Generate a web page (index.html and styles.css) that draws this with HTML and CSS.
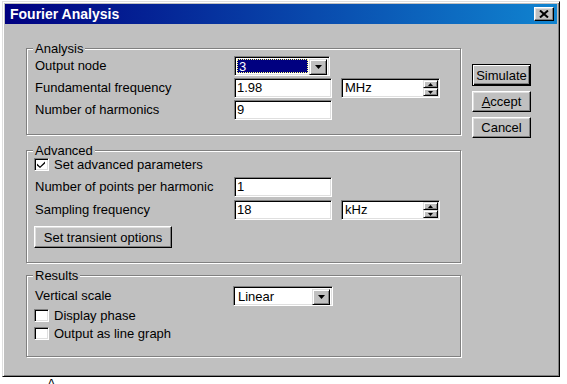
FILE: index.html
```html
<!DOCTYPE html>
<html lang="en">
<head>
    <meta charset="UTF-8">
    <meta name="viewport" content="width=device-width, initial-scale=1.0">
    <title>Fourier Analysis</title>
    <link rel="stylesheet" href="styles.css">
</head>
<body>
    <div class="window">
        <div class="titlebar">
            <span class="title">Fourier Analysis</span>
            <span class="close-btn">
                <svg width="10" height="8" viewBox="0 0 10 8"><path d="M1 0.5 L9 7.5 M9 0.5 L1 7.5" stroke="#000" stroke-width="2" fill="none"/></svg>
            </span>
        </div>
        <div class="content">
            <div class="groups">
                <div class="group analysis">
                    <div class="legend">Analysis</div>
                    <div class="row">
                        <span class="label">Output node</span>
                        <div class="field combo combo-node">
                            <span class="combo-value selected">3</span>
                            <span class="drop-btn"><svg width="7" height="4" viewBox="0 0 7 4"><path d="M0 0h7L3.5 4z" fill="#000"/></svg></span>
                        </div>
                    </div>
                    <div class="row">
                        <span class="label">Fundamental frequency</span>
                        <div class="field">1.98</div>
                        <div class="field spin-field">
                            <span class="spin-value">MHz</span>
                            <span class="spin">
                                <span class="spin-btn"><svg width="5" height="3" viewBox="0 0 5 3"><path d="M2.5 0L5 3H0z" fill="#000"/></svg></span>
                                <span class="spin-btn"><svg width="5" height="3" viewBox="0 0 5 3"><path d="M0 0h5L2.5 3z" fill="#000"/></svg></span>
                            </span>
                        </div>
                    </div>
                    <div class="row">
                        <span class="label">Number of harmonics</span>
                        <div class="field">9</div>
                    </div>
                </div>

                <div class="group advanced">
                    <div class="legend">Advanced</div>
                    <div class="check-row set-advanced">
                        <span class="check">
                            <svg width="9" height="7" viewBox="0 0 9 7"><path d="M0 2.5L3 5.5L8 0.5L8 2.5L3 7L0 4.5z" fill="#000"/></svg>
                        </span>
                        <span>Set advanced parameters</span>
                    </div>
                    <div class="row points-row">
                        <span class="label">Number of points per harmonic</span>
                        <div class="field">1</div>
                    </div>
                    <div class="row sampling-row">
                        <span class="label">Sampling frequency</span>
                        <div class="field">18</div>
                        <div class="field spin-field">
                            <span class="spin-value">kHz</span>
                            <span class="spin">
                                <span class="spin-btn"><svg width="5" height="3" viewBox="0 0 5 3"><path d="M2.5 0L5 3H0z" fill="#000"/></svg></span>
                                <span class="spin-btn"><svg width="5" height="3" viewBox="0 0 5 3"><path d="M0 0h5L2.5 3z" fill="#000"/></svg></span>
                            </span>
                        </div>
                    </div>
                    <button class="btn btn-transient">Set transient options</button>
                </div>

                <div class="group results">
                    <div class="legend">Results</div>
                    <div class="row scale-row">
                        <span class="label">Vertical scale</span>
                        <div class="field combo combo-scale">
                            <span class="combo-value">Linear</span>
                            <span class="drop-btn"><svg width="7" height="4" viewBox="0 0 7 4"><path d="M0 0h7L3.5 4z" fill="#000"/></svg></span>
                        </div>
                    </div>
                    <div class="check-row phase-row">
                        <span class="check"></span>
                        <span>Display phase</span>
                    </div>
                    <div class="check-row graph-row">
                        <span class="check"></span>
                        <span>Output as line graph</span>
                    </div>
                </div>
            </div>

            <div class="buttons">
                <button class="btn btn-default">Simulate</button>
                <button class="btn"><u>A</u>ccept</button>
                <button class="btn">Cancel</button>
            </div>
        </div>
    </div>
    <div class="below">A</div>
</body>
</html>
```

FILE: styles.css
```css
body {
    margin: 0;
    background: #fff;
    font-family: "Liberation Sans", Arial, sans-serif;
    font-size: 13px;
    color: #000;
}
.window {
    box-sizing: border-box;
    width: 558px;
    height: 376px;
    margin: 1px 0 0 2px;
    padding: 2px;
    background: #c0c0c0;
    border: 1px solid;
    border-color: #dfdfdf #000 #000 #dfdfdf;
    box-shadow: inset 1px 1px #fff, inset -1px -1px #808080;
}
.titlebar {
    height: 20px;
    display: flex;
    align-items: center;
    justify-content: space-between;
    padding-left: 5px;
    background: linear-gradient(to right, #000080, #1084d0);
}
.title {
    color: #fff;
    font-weight: bold;
    font-size: 14px;
}
.close-btn {
    box-sizing: border-box;
    width: 20px;
    height: 14px;
    margin-right: 3px;
    display: flex;
    align-items: center;
    justify-content: center;
    background: #c0c0c0;
    border: 1px solid;
    border-color: #fff #000 #000 #fff;
    box-shadow: inset -1px -1px #808080, inset 1px 1px #dfdfdf;
}
.content {
    display: flex;
    align-items: flex-start;
    padding: 24px 0 0 21px;
}
.groups {
    width: 435px;
}
.group {
    border: 1px solid #808080;
    box-shadow: inset 1px 1px #fff, 1px 1px #fff;
    padding: 0 8px 14px 8px;
}
.legend {
    width: fit-content;
    margin: -8px 0 0 -2px;
    padding: 0 2px;
    line-height: 15px;
    background: #c0c0c0;
}
.row {
    display: grid;
    grid-template-columns: 190px 98px 99px;
    column-gap: 9px;
    height: 20px;
    align-items: center;
    line-height: 15px;
}
.row + .row {
    margin-top: 2px;
}
.analysis .row:first-of-type {
    margin-top: 1px;
}
.label {
    padding-bottom: 1px;
    white-space: nowrap;
}
.field {
    box-sizing: border-box;
    height: 20px;
    background: #fff;
    border: 1px solid;
    border-color: #808080 #fff #fff #808080;
    box-shadow: inset 1px 1px #000, inset -1px -1px #dfdfdf;
    padding: 0 2px;
    line-height: 18px;
}
.combo {
    display: flex;
    padding: 1px;
    line-height: 16px;
}
.combo-node {
    width: 96px;
}
.combo-scale {
    width: 100px;
    margin-left: -1px;
}
.combo-value {
    flex: 1;
    padding-left: 2px;
    margin: 1px 0 1px 1px;
}
.combo-value.selected {
    background: #000080;
    color: #fff;
    margin-right: 1px;
    outline: 1px dotted #ffff80;
    outline-offset: -1px;
}
.drop-btn,
.spin-btn {
    box-sizing: border-box;
    display: flex;
    align-items: center;
    justify-content: center;
    background: #c0c0c0;
    border: 1px solid;
    border-color: #dfdfdf #000 #000 #dfdfdf;
    box-shadow: inset 1px 1px #fff, inset -1px -1px #808080;
}
.drop-btn {
    width: 18px;
    height: 16px;
    margin: 1px 1px 1px 0;
}
.spin-field {
    display: flex;
    padding: 0 1px 0 2px;
}
.spin-value {
    flex: 1;
    padding-left: 1px;
}
.spin {
    display: flex;
    flex-direction: column;
    width: 15px;
    margin: 1px 0;
}
.spin-btn {
    height: 8px;
}
.check-row {
    display: flex;
    align-items: center;
    gap: 5px;
    height: 15px;
    line-height: 15px;
    margin-left: -1px;
}
.check {
    box-sizing: border-box;
    width: 15px;
    height: 13px;
    display: flex;
    align-items: center;
    justify-content: center;
    background: #fff;
    border: 1px solid;
    border-color: #808080 #fff #fff #808080;
    box-shadow: inset 1px 1px #000, inset -1px -1px #dfdfdf;
}
.advanced {
    margin-top: 15px;
}
.set-advanced {
    margin-top: -1px;
}
.advanced .points-row {
    margin-top: 5px;
}
.advanced .sampling-row {
    margin-top: 3px;
}
.btn {
    box-sizing: border-box;
    width: 59px;
    height: 21px;
    padding: 0;
    font-family: "Liberation Sans", Arial, sans-serif;
    font-size: 13px;
    color: #000;
    background: #c0c0c0;
    border: 1px solid;
    border-color: #fff #000 #000 #fff;
    box-shadow: inset -1px -1px #808080, inset 1px 1px #dfdfdf;
}
.btn-default {
    height: 22px;
    border-color: #000;
    box-shadow: inset 1px 1px #fff, inset -1px -1px #000, inset -2px -2px #808080;
}
.btn-transient {
    display: block;
    width: 138px;
    height: 22px;
    margin: 6px 0 0 -1px;
}
.results {
    margin-top: 12px;
    padding-bottom: 15px;
}
.results .scale-row {
    margin-top: 3px;
}
.phase-row {
    margin-top: 2px;
}
.graph-row {
    margin-top: 3px;
}
.buttons {
    display: flex;
    flex-direction: column;
    gap: 5px;
    margin: 16px 0 0 11px;
}
.below {
    margin-top: 1px;
    padding-left: 47px;
    line-height: 12px;
}
```
